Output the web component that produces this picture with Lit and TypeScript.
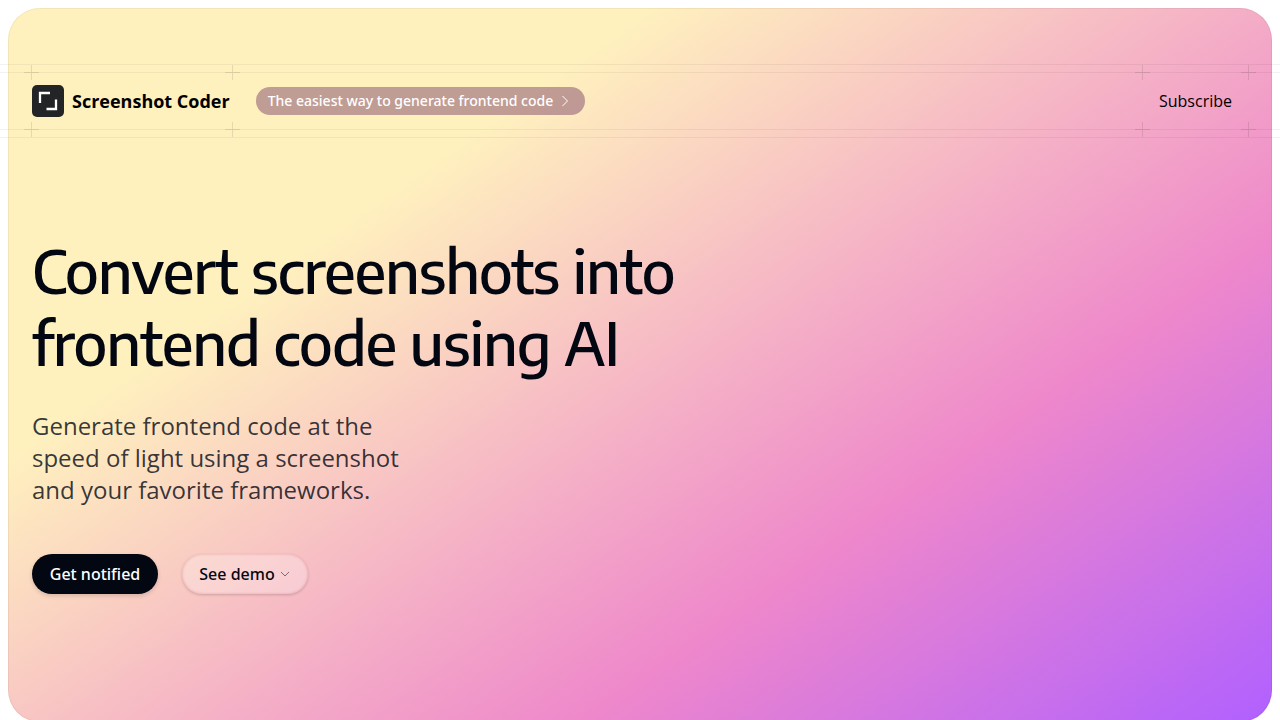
import { LitElement, html, css } from "lit";
import { customElement, property } from "lit/decorators.js";

@customElement("plus-mark")
class PlusMark extends LitElement {
  @property({ reflect: true }) corner = "top-left";

  static styles = css`
    :host { position: absolute; width: 15px; height: 15px; pointer-events: none; }
    :host([corner^="top"]) { top: -7px; }
    :host([corner^="bottom"]) { bottom: -7px; }
    :host([corner$="left"]) { left: -8px; }
    :host([corner$="right"]) { right: -8px; }
    svg { display: block; fill: rgb(0 0 0 / 0.1); }
  `;

  render() {
    return html`<svg width="15" height="15" viewBox="0 0 15 15" aria-hidden="true">
      <path d="M8 0H7V7H0V8H7V15H8V8H15V7H8V0Z" />
    </svg>`;
  }
}

@customElement("app-root")
class AppRoot extends LitElement {
  static styles = css`
    :host {
      display: block;
      overflow: hidden;
      min-height: 100vh;
      background: #fff;
      color: #030712;
      font-family: "Open Sans", "Noto Sans", sans-serif;
      font-size: 16px;
      line-height: 24px;
      font-weight: 500;
    }
    * { box-sizing: border-box; }
    a { color: inherit; text-decoration: none; }
    .hero {
      margin: 8px 8px 0;
      padding: 56px 24px 128px;
      border-radius: 32px;
      box-shadow: inset 0 0 0 1px rgb(0 0 0 / 0.05);
      background: linear-gradient(145deg, #fff1be 28%, #ee87cb 70%, #b060ff);
    }
    .inner { max-width: 1216px; margin: 0 auto; }
    .bar {
      position: relative;
      display: flex;
      justify-content: space-between;
      padding: 8px 0;
    }
    .rules {
      position: absolute;
      inset: 0 calc(50% - 50vw);
      border: solid rgb(0 0 0 / 0.05);
      border-width: 1px 0;
      pointer-events: none;
    }
    .rules.inset { top: 8px; bottom: 8px; }
    .left { display: flex; align-items: center; gap: 24px; }
    .cell { position: relative; display: flex; align-items: center; }
    .brand {
      display: flex;
      align-items: center;
      gap: 8px;
      padding: 13px 2px 13px 0;
      color: #000;
      font-size: 18px;
      line-height: 32px;
      font-weight: 700;
    }
    .pill {
      display: flex;
      align-items: center;
      gap: 4px;
      padding: 2px 12px;
      border-radius: 14px;
      background: rgb(134 81 111 / 0.53);
      color: #fff;
      font-family: "Noto Sans", sans-serif;
      font-size: 14px;
    }
    .subscribe { padding: 12px 16px; color: #000; }
    h1 {
      margin: 96px 0 0;
      font-family: "Encode Sans", "Noto Sans", sans-serif;
      font-size: 60px;
      line-height: 72px;
      font-weight: 500;
      letter-spacing: -0.02em;
      max-width: 768px;
    }
    .lead {
      margin: 32px 0 0;
      max-width: 384px;
      color: rgb(3 7 18 / 0.8);
      font-size: 24px;
      line-height: 32px;
    }
    .actions { display: flex; gap: 24px; margin-top: 48px; }
    button {
      display: flex;
      align-items: center;
      justify-content: center;
      gap: 4px;
      min-width: 126px;
      height: 40px;
      padding: 0 16px;
      border: 0;
      border-radius: 20px;
      font: inherit;
      font-family: "Noto Sans", sans-serif;
      color: inherit;
    }
    .primary { background: #030712; color: #fff; box-shadow: 0 2px 4px rgb(0 0 0 / 0.15); }
    .secondary {
      background: rgb(255 255 255 / 0.25);
      box-shadow: inset 0 0 2px 1px rgb(209 93 120 / 0.2), 0 1px 3px rgb(0 0 0 / 0.18);
    }
  `;

  render() {
    return html`
      <main class="hero">
        <div class="inner">
          <header class="bar">
            <div class="rules"></div>
            <div class="rules inset"></div>
            <div class="left">
              <div class="cell">
                <plus-mark corner="top-left"></plus-mark>
                <plus-mark corner="top-right"></plus-mark>
                <plus-mark corner="bottom-left"></plus-mark>
                <plus-mark corner="bottom-right"></plus-mark>
                <a class="brand" href="#">
                  <svg width="32" height="32" viewBox="0 0 32 32" aria-hidden="true">
                    <rect width="32" height="32" rx="5" fill="#222425" />
                    <path d="M8 18V8H18M24 14.5V24H14.5" fill="none" stroke="#fff" stroke-width="2.3" />
                  </svg>
                  <span>Screenshot Coder</span>
                </a>
              </div>
              <a class="pill" href="#">
                <span>The easiest way to generate frontend code</span>
                <svg width="16" height="16" viewBox="0 0 16 16" fill="none" stroke="#fff" aria-hidden="true">
                  <path d="M5.5 3L10.5 8L5.5 13" />
                </svg>
              </a>
            </div>
            <nav class="cell">
              <plus-mark corner="top-left"></plus-mark>
              <plus-mark corner="top-right"></plus-mark>
              <plus-mark corner="bottom-left"></plus-mark>
              <plus-mark corner="bottom-right"></plus-mark>
              <a class="subscribe" href="#">Subscribe</a>
            </nav>
          </header>
          <h1>Convert screenshots into frontend code using AI</h1>
          <p class="lead">Generate frontend code at the speed of light using a screenshot and your favorite frameworks.</p>
          <div class="actions">
            <button class="primary" type="button">Get notified</button>
            <button class="secondary" type="button">
              See demo
              <svg width="12" height="12" viewBox="0 0 12 12" fill="none" stroke="#030712" stroke-opacity="0.5" aria-hidden="true">
                <path d="M2 4L6 8L10 4" />
              </svg>
            </button>
          </div>
        </div>
      </main>
    `;
  }
}
